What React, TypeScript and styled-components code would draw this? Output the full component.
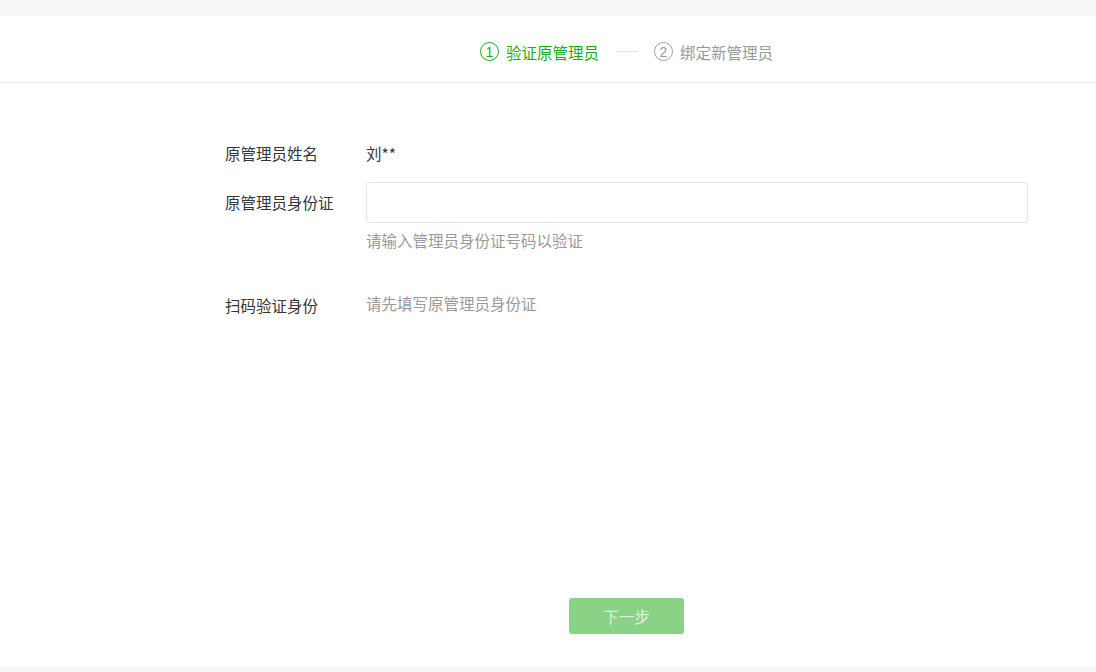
import React from 'react';
import styled, { createGlobalStyle } from 'styled-components';

const GlobalStyle = createGlobalStyle`
  html, body {
    margin: 0;
    padding: 0;
    background: #f6f7f9;
    font-family: "Noto Sans CJK SC", "Noto Sans", sans-serif;
  }
`;

const Page = styled.div`
  width: 1096px;
  height: 672px;
  padding-top: 16px;
  box-sizing: border-box;
  overflow: hidden;
`;

const Card = styled.div`
  background: #fff;
  height: 651px;
  display: flex;
  flex-direction: column;
`;

const Header = styled.div`
  height: 67px;
  border-bottom: 1px solid #e5e5e5;
  box-sizing: border-box;
  display: flex;
  align-items: center;
  justify-content: center;
  padding-left: 157px;
  padding-top: 5px;
`;

const Step = styled.div<{ active?: boolean }>`
  display: flex;
  align-items: center;
  gap: 7px;
  font-size: 15.5px;
  color: ${(p) => (p.active ? '#1aad19' : '#999')};
`;

const Circle = styled.span<{ active?: boolean }>`
  width: 17px;
  height: 17px;
  border-radius: 50%;
  border: 1px solid ${(p) => (p.active ? '#1aad19' : '#a0a0a0')};
  display: flex;
  align-items: center;
  justify-content: center;
  font-family: "Liberation Sans", sans-serif;
  font-size: 14px;
  line-height: 1;
`;

const Divider = styled.span`
  width: 22px;
  height: 1px;
  background: #e2e2e2;
  margin: 0 16px 0 17px;
`;

const Body = styled.div`
  flex: 1;
  padding-left: 157px;
  display: flex;
  flex-direction: column;
  align-items: center;
`;

const Form = styled.div`
  width: 803px;
  margin-top: 57px;
  display: flex;
  flex-direction: column;
`;

const Row = styled.div<{ gap?: number }>`
  display: grid;
  grid-template-columns: 141px 1fr;
  margin-bottom: ${(p) => p.gap ?? 0}px;
`;

const Label = styled.div<{ top?: number }>`
  font-size: 15.5px;
  color: #353535;
  line-height: 26px;
  padding-top: ${(p) => p.top ?? 0}px;
`;

const Value = styled.div<{ muted?: boolean; top?: number }>`
  font-size: 15.5px;
  line-height: 26px;
  color: ${(p) => (p.muted ? '#9a9a9a' : '#353535')};
  padding-top: ${(p) => p.top ?? 0}px;
`;

const Input = styled.input`
  width: 100%;
  height: 41px;
  box-sizing: border-box;
  border: 1px solid #e3e3e3;
  border-radius: 4px;
  outline: none;
  padding: 0 10px;
  font-size: 15px;
`;

const Hint = styled.div`
  margin-top: 4px;
  font-size: 15.5px;
  line-height: 26px;
  color: #9a9a9a;
`;

const Footer = styled.div`
  margin-top: auto;
  margin-bottom: 33px;
`;

const Button = styled.button`
  width: 115px;
  height: 36px;
  border: none;
  border-radius: 3px;
  background: #8ad386;
  color: #dcf1da;
  font-family: "Noto Sans CJK SC", sans-serif;
  font-size: 15.5px;
  cursor: not-allowed;
`;

export default function App() {
  return (
    <Page>
      <GlobalStyle />
      <Card>
        <Header>
          <Step active>
            <Circle active>1</Circle>
            验证原管理员
          </Step>
          <Divider />
          <Step>
            <Circle>2</Circle>
            绑定新管理员
          </Step>
        </Header>
        <Body>
          <Form>
            <Row gap={16}>
              <Label>原管理员姓名</Label>
              <Value>刘**</Value>
            </Row>
            <Row gap={37}>
              <Label top={7}>原管理员身份证</Label>
              <div>
                <Input type="text" />
                <Hint>请输入管理员身份证号码以验证</Hint>
              </div>
            </Row>
            <Row>
              <Label top={2}>扫码验证身份</Label>
              <Value muted>请先填写原管理员身份证</Value>
            </Row>
          </Form>
          <Footer>
            <Button disabled>下一步</Button>
          </Footer>
        </Body>
      </Card>
    </Page>
  );
}
